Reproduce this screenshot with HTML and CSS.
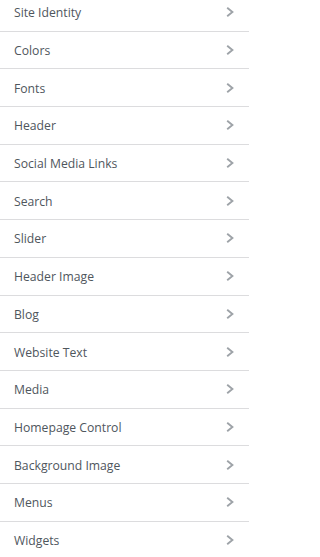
FILE: index.html
```html
<!DOCTYPE html>
<html lang="en">
<head>
<meta charset="utf-8">
<title>Customizer</title>
<link rel="stylesheet" href="styles.css">
</head>
<body>
<ul class="panels">
  <li class="panel"><span class="label">Site Identity</span><svg class="chev" viewBox="0 0 8 10"><polyline points="1.2,0.8 6.4,5 1.2,9.2"/></svg></li>
  <li class="panel"><span class="label">Colors</span><svg class="chev" viewBox="0 0 8 10"><polyline points="1.2,0.8 6.4,5 1.2,9.2"/></svg></li>
  <li class="panel"><span class="label">Fonts</span><svg class="chev" viewBox="0 0 8 10"><polyline points="1.2,0.8 6.4,5 1.2,9.2"/></svg></li>
  <li class="panel"><span class="label">Header</span><svg class="chev" viewBox="0 0 8 10"><polyline points="1.2,0.8 6.4,5 1.2,9.2"/></svg></li>
  <li class="panel"><span class="label">Social Media Links</span><svg class="chev" viewBox="0 0 8 10"><polyline points="1.2,0.8 6.4,5 1.2,9.2"/></svg></li>
  <li class="panel"><span class="label">Search</span><svg class="chev" viewBox="0 0 8 10"><polyline points="1.2,0.8 6.4,5 1.2,9.2"/></svg></li>
  <li class="panel"><span class="label">Slider</span><svg class="chev" viewBox="0 0 8 10"><polyline points="1.2,0.8 6.4,5 1.2,9.2"/></svg></li>
  <li class="panel"><span class="label">Header Image</span><svg class="chev" viewBox="0 0 8 10"><polyline points="1.2,0.8 6.4,5 1.2,9.2"/></svg></li>
  <li class="panel"><span class="label">Blog</span><svg class="chev" viewBox="0 0 8 10"><polyline points="1.2,0.8 6.4,5 1.2,9.2"/></svg></li>
  <li class="panel"><span class="label">Website Text</span><svg class="chev" viewBox="0 0 8 10"><polyline points="1.2,0.8 6.4,5 1.2,9.2"/></svg></li>
  <li class="panel"><span class="label">Media</span><svg class="chev" viewBox="0 0 8 10"><polyline points="1.2,0.8 6.4,5 1.2,9.2"/></svg></li>
  <li class="panel"><span class="label">Homepage Control</span><svg class="chev" viewBox="0 0 8 10"><polyline points="1.2,0.8 6.4,5 1.2,9.2"/></svg></li>
  <li class="panel"><span class="label">Background Image</span><svg class="chev" viewBox="0 0 8 10"><polyline points="1.2,0.8 6.4,5 1.2,9.2"/></svg></li>
  <li class="panel"><span class="label">Menus</span><svg class="chev" viewBox="0 0 8 10"><polyline points="1.2,0.8 6.4,5 1.2,9.2"/></svg></li>
  <li class="panel"><span class="label">Widgets</span><svg class="chev" viewBox="0 0 8 10"><polyline points="1.2,0.8 6.4,5 1.2,9.2"/></svg></li>
</ul>
</body>
</html>
```
FILE: styles.css
```css
html, body {
  margin: 0;
  padding: 0;
  background: #ffffff;
  overflow: hidden;
}
.panels {
  list-style: none;
  width: 249px;
  margin: -6px 0 0 0;
  padding: 0;
  font-family: "Open Sans", "Noto Sans", sans-serif;
  font-size: 12.2px;
  color: #4f565d;
}
.panel {
  display: flex;
  align-items: center;
  justify-content: space-between;
  box-sizing: border-box;
  height: 37.7px;
  padding: 1px 14px 0 14px;
  border-bottom: 1px solid #dcdcde;
}
.chev {
  width: 8px;
  height: 10px;
  margin-top: -1px;
  margin-right: 1px;
  fill: none;
  stroke: #9ea3a8;
  stroke-width: 1.9;
  stroke-linecap: butt;
  stroke-linejoin: miter;
}
```
